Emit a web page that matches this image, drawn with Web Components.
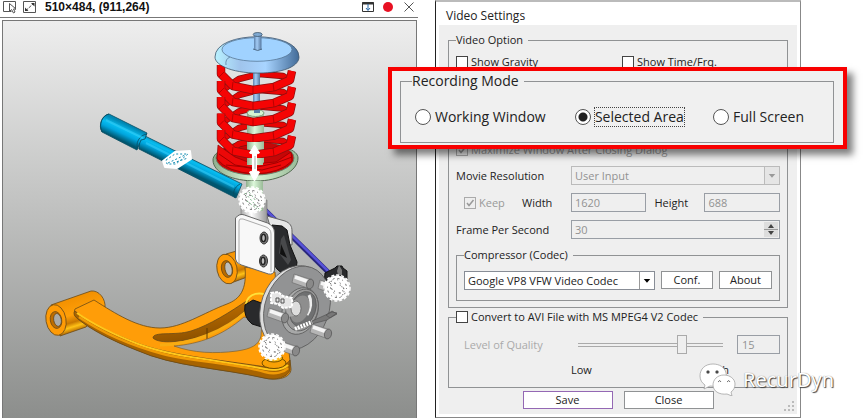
<!DOCTYPE html>
<html lang="en">
<head>
<meta charset="utf-8">
<title>Video Settings</title>
<style>
  html, body { margin: 0; background: #fff; }
  body { font: 500 11px/16px "Open Sans", "Noto Sans", sans-serif; color: #222; }
</style>
</head>
<body>
<app-stage>
  <capture-window slot="capture" caption="510×484, (911,264)"><model-view></model-view></capture-window>
  <video-settings slot="settings"></video-settings>
</app-stage>

<script>
const define = (name, html, setup) => {
  const template = document.createElement('template');
  template.innerHTML = '<style>*{box-sizing:border-box} button,input,select{font:inherit;color:inherit;margin:0;min-width:0;border-radius:0}</style>' + html;
  customElements.define(name, class extends HTMLElement {
    constructor() {
      super();
      this.attachShadow({ mode: 'open' }).append(template.content.cloneNode(true));
    }
    connectedCallback() {
      const root = this.shadowRoot;
      root.querySelectorAll('[data-text]').forEach(n => { n.textContent = this.getAttribute(n.dataset.text) || ''; });
      if (setup) setup(this, root);
    }
  });
};

define('app-stage', `
<style>
  :host { display: grid; grid-template-columns: minmax(0, 418fr) minmax(0, 366fr); column-gap: 17px; padding-right: 64px; min-height: 100vh; box-sizing: border-box; }
  ::slotted(*) { min-width: 0; }
</style>
<slot name="capture"></slot><slot name="settings"></slot>`);

define('capture-window', `
<style>
  :host { display: flex; flex-direction: column; background: #fff; }
  header { display: flex; align-items: center; height: 18px; padding: 0 3px 3px; border-bottom: 1px solid #777; }
  h1 { flex: 1; margin: 0 0 0 8px; font: bold 12px/14px "Liberation Sans", sans-serif; color: #111; white-space: nowrap; }
  button { display: block; padding: 0; border: 0; background: none; height: 14px; }
  svg { display: block; }
  .pick { margin-right: 6px; }
  .right { display: flex; gap: 7px; align-items: center; }
  main { flex: 1; display: flex; margin: 2px 1px 0 2px; border: 1px solid #777; border-bottom: 0; }
  ::slotted(*) { flex: 1; min-width: 0; }
</style>
<header>
  <button class="pick" aria-label="Select area"><svg width="14" height="14" fill="none" stroke="#555"><path d="M8.500 11.500H.500V1.500h12v8"/><path d="M6.500 3.500v8l2-2 2 3.500 1.500-1-1.500-3h2.500z" fill="#fff"/></svg></button>
  <button aria-label="Resize area"><svg width="14" height="14" fill="none" stroke="#555"><path d="M.5 1.500h12v11H.5z"/><path d="M3 10.500l8-7.500" stroke-dasharray="3 1"/><path d="M8 3h3.500v3.500zM2 7.500v3.500h3.500z" fill="#333" stroke="none"/></svg></button>
  <h1 data-text="caption"></h1>
  <div class="right">
    <button aria-label="Save settings"><svg width="13" height="14" fill="none" stroke="#333"><path d="M.5 2.500h11v9H.5z"/><path d="M0 3.500h12" stroke-width="2"/><path d="M6 4v6M4 8l2 2.500L8 8" stroke="#2869a8"/></svg></button>
    <button aria-label="Record"><svg width="13" height="14"><circle cx="6" cy="7" r="5" fill="#e81123"/></svg></button>
    <button aria-label="Close"><svg width="13" height="14" stroke="#555" fill="none"><path d="M2.500 2.500l9 9M11.500 2.500l-9 9"/></svg></button>
  </div>
</header>
<main><slot></slot></main>`);

define('model-view', `
<style>
  :host { display: block; background: linear-gradient(#eee, #c3c4c3 44%, #8c8e8c); }
  svg { display: block; width: 100%; height: 100%; }
</style>
<svg viewBox="3 21 413 397" role="img" aria-label="Suspension assembly model" stroke-linejoin="round">
  <defs>
    <linearGradient id="bg" gradientUnits="userSpaceOnUse" x1="0" y1="21" x2="0" y2="418"><stop stop-color="#eee"/><stop offset=".44" stop-color="#c3c4c3"/><stop offset="1" stop-color="#8c8e8c"/></linearGradient>
    <linearGradient id="cap"><stop stop-color="#b9f2ff"/><stop offset=".3" stop-color="#a0c4ec"/><stop offset=".6" stop-color="#a8d4ff"/><stop offset="1" stop-color="#426b98"/></linearGradient>
    <linearGradient id="grn"><stop stop-color="#8fae8d"/><stop offset=".45" stop-color="#dcf8da"/><stop offset="1" stop-color="#9abb98"/></linearGradient>
    <linearGradient id="rod"><stop stop-color="#5e83ad"/><stop offset=".4" stop-color="#a3ccf6"/><stop offset="1" stop-color="#56779e"/></linearGradient>
    <linearGradient id="wht"><stop stop-color="#aaa"/><stop offset=".4" stop-color="#fff"/><stop offset="1" stop-color="#999"/></linearGradient>
    <linearGradient id="tube" gradientUnits="userSpaceOnUse" x1="166" y1="143" x2="159" y2="158"><stop stop-color="#0088b4"/><stop offset=".35" stop-color="#08bdf0"/><stop offset=".6" stop-color="#00a5dd"/><stop offset="1" stop-color="#00566f"/></linearGradient>
    <linearGradient id="bush" gradientUnits="userSpaceOnUse" x1="76" y1="296" x2="86" y2="328"><stop stop-color="#f29000"/><stop offset=".5" stop-color="#ff9f08"/><stop offset=".72" stop-color="#c87700"/><stop offset=".85" stop-color="#ffc216"/><stop offset="1" stop-color="#b66a00"/></linearGradient>
    <linearGradient id="slot" x2=".35" y2="1"><stop stop-color="#ffac15"/><stop offset=".4" stop-color="#b56800"/><stop offset="1" stop-color="#8c5100"/></linearGradient>
    <g id="front" fill="none"><path d="M221-8L221 1l12 12 20 4 21-3 16-7 2-9" stroke="#8c1010" stroke-width="8.500"/><path d="M221-8L221 1l12 12 20 4 21-3 16-7 2-9" stroke="#f50404" stroke-width="7.200"/><path d="M233 9l-1 8M253 13v8M273 10l1 8M224-1l-5 5" stroke="#a00000" stroke-width=".7"/></g>
    <g id="back" fill="none"><path d="M291 5l-8-5-24-2-20 5-18 12" stroke="#7c1010" stroke-width="6.500"/><path d="M291 5l-8-5-24-2-20 5-18 12" stroke="#e80404" stroke-width="5.200"/></g>
    <g id="ball"><circle r="12.500" fill="#fff"/><circle r="13" fill="none" stroke="#fff" stroke-width="1.500" stroke-dasharray="3 2"/><g fill="none" stroke="#555" stroke-width=".9"><circle r="9.500" stroke-dasharray="1 4 2 3"/><ellipse rx="5" ry="10" transform="rotate(-20)" stroke-dasharray="1 3"/><ellipse rx="8" ry="4" transform="rotate(25)" stroke-dasharray="1 3 2 4"/></g></g>
    <g id="stud"><path d="M-8-6L9-.500 7 8.500-10 2.500z" fill="#b5b5b5" stroke="#666" stroke-width=".6"/><path d="M-7-3L7 2" stroke="#f5f5f5" stroke-width="3.500"/><ellipse cx="8" cy="4" rx="3.500" ry="5" transform="rotate(15 8 4)" fill="#898989" stroke="#555" stroke-width=".7"/></g>
    <g id="bolt"><ellipse rx="4" ry="6" fill="#777" stroke="#333"/><ellipse cx="-.5" rx="2" ry="3.600" fill="#bbb" stroke="#222" stroke-width="1.400"/></g>
  </defs>

  <g stroke="#6a4a18" stroke-width=".8">
    <path d="M226 254L240 250 250 276 231 283z" fill="url(#bush)"/>
    <ellipse cx="227" cy="269" rx="10" ry="15" transform="rotate(-12 227 269)" fill="#ff9b05"/>
    <ellipse cx="227" cy="269" rx="5.500" ry="8.500" transform="rotate(-12 227 269)" fill="#b86b00"/>
    <ellipse cx="228.500" cy="269" rx="3.500" ry="7" transform="rotate(-12 228 269)" fill="#bcbdbb"/>
    <path d="M51 305L91 291c8-1 15 8 14 17L86 327 60 336z" fill="url(#bush)"/>
    <ellipse cx="56" cy="320" rx="10" ry="15.500" transform="rotate(-10 56 320)" fill="#ff9b05"/>
    <ellipse cx="56" cy="320" rx="5.700" ry="8.500" transform="rotate(-10 56 320)" fill="#bd6d00"/>
    <ellipse cx="57.500" cy="320" rx="3.800" ry="6.500" transform="rotate(-10 57 320)" fill="#a9aaa8"/>
    <path d="M75 309L94 300C116 314 138 328 160 328c22 0 43-15 67-24 13-5 20-14 18-37l30 5 5 70 9 10 2 17c0 9-14 12-26 9-43-10-91-11-128-28-24-9-46-21-60-32-3-2-3-7-2-9z" fill="#ff9d08"/>
    <path d="M75 311c14 12 36 22 62 32 32 12 76 16 129 24 10 2 20-1 24-7v10c-2 7-14 11-26 8-43-10-90-11-128-28-23-9-45-20-58-31-4-3-5-6-3-8z" fill="#a76300"/>
  </g>
  <g fill="none">
    <path d="M77 313c17 12 38 22 61 31 34 13 80 16 127 25 10 2 19 0 23-4" stroke="#ffc81c" stroke-width="2"/>
    <path d="M79 317c28 19 54 29 84 37 33 8 70 9 102 18 11 3 19 0 23-4" stroke="#f09a06" stroke-width="2.500"/>
    <path d="M153 338c6 6 29 5 55-4 18-7 31-17 40-27v-7c-18 12-38 25-57 31-16 5-38 0-38 7z" fill="url(#slot)" stroke="#6a4a18" stroke-width=".8"/>
    <path d="M160 345c30 0 64-13 88-35" stroke="#f8ac12" stroke-width="3"/>
    <path d="M207 328v11" stroke="#5d3900"/>
  </g>
  <path d="M174 346c25-2 48-10 70-29l18 4-1 15c-2 9-10 13-24 15-22 3-44 2-63-5z" fill="url(#bg)" stroke="#7e622f" stroke-width=".7"/>
  <path d="M246 304c2-11 15-14 25-6" fill="none" stroke="#ffe13a" stroke-width="2"/>
  <path d="M245 305l8-5 14 5-2 23-13-4q-9-7-7-19z" fill="#292a2c" stroke="#111"/>
  <ellipse cx="274" cy="363" rx="12" ry="5.500" fill="#f9a105" stroke="#735000"/><ellipse cx="274" cy="358" rx="8.500" ry="4" fill="#ffbd18" stroke="#735000"/>

  <path d="M265 210l63 62" stroke="#29277d" stroke-width="5"/><path d="M266 210l62 61" stroke="#5752d8" stroke-width="2.500"/>
  <path d="M325 273l10-5 2-2h5l1 2 4 3v13l-14 6-9-5z" fill="#292a2c" stroke="#111"/><path d="M337 271l2-6 3 5v5h-4z" fill="#777"/>

  <path d="M267 216l18 5c5 2 7 5 7 10v14l-17-2z" fill="#e6e6e6" stroke="#666"/>
  <path d="M241 200h26v28l-26-6z" fill="url(#wht)" stroke="#777" stroke-width=".6"/>
  <path d="M272 225l10 1 5 4 3 15 7 17-1 8-11 6-8-7-7-10z" fill="#2a2b2d" stroke="#111"/>
  <path d="M281 239l3-4 7 25-3 5-9-12z" fill="#48494b"/><path d="M281 244l6 14-7-4z" fill="#111"/>
  <path d="M235.500 218q4-5 9-3l23 8q7 3 7 10v37q-1 5-6 4l-27-9q-6-2-6-6z" fill="#f8f8f8" stroke="#666"/>
  <path d="M239 264v-43q0-3 4-2l23 8q5 2 5 7v38" fill="none" stroke="#aaa"/>
  <use href="#bolt" x="264" y="238"/><use href="#bolt" x="263.500" y="261"/>

  <g stroke="#5d5d5d" stroke-width=".8">
    <ellipse cx="294" cy="308" rx="33" ry="43.500" transform="rotate(20 294 308)" fill="#ddd"/>
    <ellipse cx="297" cy="308" rx="32" ry="43" transform="rotate(20 297 308)" fill="#929394"/>
    <ellipse cx="300" cy="311" rx="17.500" ry="24" transform="rotate(20 300 311)" fill="#a7a8a8"/>
    <ellipse cx="302" cy="310" rx="15.500" ry="21.500" transform="rotate(20 302 310)" fill="#999"/>
    <ellipse cx="303" cy="309" rx="12.500" ry="18" transform="rotate(20 303 309)" fill="#6f7071"/>
    <path d="M309 295c3 6 2 14-2 20" fill="none" stroke="#eee" stroke-width="3"/>
    <ellipse cx="300" cy="309" rx="9" ry="14" transform="rotate(20 300 309)" fill="#8e8e8e" stroke="none"/>
    <path d="M284 302l12-2 4 15-12 2z" fill="#aaa" stroke="none"/><ellipse cx="296" cy="308.500" rx="5" ry="7.500" fill="#ddd"/>
  </g>
  <use href="#stud" x="302" y="280"/><use href="#stud" x="277" y="314"/><use href="#stud" x="320" y="330"/><use href="#stud" x="288" y="347"/><use href="#stud" x="328" y="286"/>
  <path d="M299 327l33-15 5 1-10 7-23 6zM326 315l6-4 5 3-7 4z" fill="#777" stroke="#555" stroke-width=".7"/>
  <path d="M295 329l17-7" stroke="#fff" stroke-width="4" stroke-dasharray="2 1"/>
  <path d="M271 293l7-1 5 4 9 2v9l-9 1-5-4-7-1z" fill="#e5e5e5" stroke="#fff" stroke-width="2" stroke-dasharray="3 1"/><path d="M276 298h3v4h-3zm5 1h3v4h-3z" fill="none" stroke="#555"/>
  <use href="#ball" x="337" y="288"/><use href="#ball" x="272" y="347"/>

  <path d="M213 160c0 13 20 21 43 21s42-10 42-23c0-8-16-14-42-14s-43 7-43 16z" fill="url(#grn)" stroke="#536951"/>
  <ellipse cx="255" cy="158" rx="39" ry="17" fill="#c50707" stroke="#69826a"/>
  <g><use href="#back" y="76"/><use href="#back" y="92"/><use href="#back" y="108.500"/><use href="#back" y="125"/><use href="#back" y="141"/></g>
  <path d="M253 70h7v44h-7z" fill="url(#rod)"/>
  <path d="M247 113v51q8 5 17 0v-51z" fill="url(#grn)"/><ellipse cx="255.500" cy="113" rx="8.500" ry="3.500" fill="#d5f3d1" stroke="#809c7e"/><path d="M254 108h6v5h-6z" fill="#597fa8"/>
  <g><use href="#front" y="73"/><use href="#front" y="89"/><use href="#front" y="105"/><use href="#front" y="121.500"/><use href="#front" y="138"/></g>
  <path d="M218 145l-1 14q10 13 38 15 25-1 37-13l-1-9-15 10-23 2-18-7z" fill="#ec0808" stroke="#8c0000" stroke-width=".7"/>
  <path d="M219 154l16 11 18 3 23-5 16-6M226 165l18 2 18 3 19-5" fill="none" stroke="#a20000"/>
  <path d="M247 142h17v5h-17zM247 158h16v7h-16z" fill="url(#grn)"/>
  <path d="M246 181h17v30h-17z" fill="url(#grn)"/>
  <path d="M215 57c0-27 84-27 84 0 0 8-12 15-36 16-28 1-48-7-48-16z" fill="url(#cap)" stroke="#3f566c" stroke-width=".8"/>
  <ellipse cx="257" cy="49.500" rx="35" ry="11.800" fill="#a0d2ff" stroke="#4f6d89" stroke-width=".7"/>
  <path d="M230 57q-5 2-4 8" fill="none" stroke="#4f7392" stroke-width=".7"/>
  <path d="M254 35h7.500v15h-7.500z" fill="url(#rod)"/><ellipse cx="257.700" cy="34.500" rx="4.500" ry="2" fill="#7fa9d2" stroke="#3d556b" stroke-width=".8"/><path d="M253 49q5 3 9 0" fill="none" stroke="#4f6d89"/>

  <g stroke="#064b61" stroke-width=".8">
    <path d="M139 133l103 51-6 14-97-49z" fill="url(#tube)"/>
    <path d="M109 114l38 19-2 6-4 1-4 10-35-18c-4-7 0-17 7-18z" fill="url(#tube)"/>
    <path d="M109 114c-6 1-11 10-7 18" fill="none"/><path d="M147 134c-8 1-12 10-9 15M240 184c-6 3-8 10-5 14" fill="none"/>
  </g>
  <path d="M106 120l37 18M146 143l88 44" stroke="#45d8ff" stroke-width="2" opacity=".45"/>
  <path d="M163 161l12-9 15-1 1 8-14 9-12-1z" fill="#fff" stroke="#fff" stroke-width="2"/><path d="M166 160l9-6 13 0-12 10-9 0zM168 163l17-8M173 163l15-5" fill="none" stroke="#178eb2" stroke-dasharray="2 2"/>
  <use href="#ball" x="252" y="200"/>
  <g fill="none" stroke="#7fb489"><path d="M245 193l14 16M247 201l10 8M249 192l7 9" stroke-dasharray="2 2"/></g>
  <path d="M254.500 145l5 8-3 1v17l3 1-5 9-5-9 3-1v-17l-3-1z" fill="#fff" stroke="#fff"/><path d="M255 156v13" stroke="#888" stroke-width=".7"/>
</svg>`);

define('group-box', `
<style>
  :host { display: block; }
  fieldset { margin: 0; min-width: 0; border: 1px solid #909294; padding: var(--box-padding, 6px 7px 6px); box-shadow: inset 0 0 0 1px #fafafa; box-shadow: none; }
  legend { padding: 0 5px 0 0; height: var(--legend-height, 16px); margin-left: var(--legend-indent, 0px); white-space: nowrap; }
</style>
<fieldset><legend><slot name="legend"><span data-text="legend"></span></slot></legend><slot></slot></fieldset>`);

define('check-field', `
<style>
  :host { display: block; white-space: nowrap; }
  label { display: flex; align-items: center; gap: 3px; height: 16px; }
  input { appearance: none; width: 12px; height: 12px; border: 1px solid #444; background: #fff; }
  span { display: grid; }
  input, svg { grid-area: 1 / 1; }
  svg { display: none; }
  b { font-weight: inherit; }
  :host([disabled]) { color: #999; }
  :host([disabled]) input { border-color: #aaa; background: #eee; }
  input:checked + svg { display: block; }
</style>
<label><span><input type="checkbox"><svg width="12" height="12" fill="none" stroke="#999" stroke-width="1.500"><path d="M3 6l2 2.500L9.500 3"/></svg></span><b data-text="label"></b></label>`,
(el, root) => {
  const input = root.querySelector('input');
  input.checked = el.hasAttribute('checked');
  input.disabled = el.hasAttribute('disabled');
});

define('combo-field', `
<style>
  :host { display: block; min-width: 0; }
  label { display: grid; grid-template-columns: var(--label-width, 115px) minmax(0, 1fr); align-items: center; white-space: nowrap; }
  :host([bare]) label { grid-template-columns: minmax(0, 1fr); }
  :host([bare]) .text { display: none; }
  .box { display: grid; grid-template-columns: minmax(0, 1fr) 15px; height: 19px; border: 1px solid #888d96; background: #fff; }
  select { grid-area: 1 / 1 / 2 / 3; appearance: none; border: 0; background: none; padding: 0 18px 0 3px; outline: 0; opacity: 1; line-height: 16px; }
  svg { grid-area: 1 / 2; width: 15px; height: 17px; border-left: 1px solid #999; pointer-events: none; }
  :host([disabled]) .box { border-color: #bbb; background: #efefef; color: #929292; }
  :host([disabled]) svg { border-color: #bbb; background: #e5e5e5; fill: #999; }
</style>
<label><span class="text" data-text="label"></span><span class="box"><select><option data-text="value"></option></select><svg viewBox="0 0 15 17"><path d="M4 7h7l-3.500 4z"/></svg></span></label>`,
(el, root) => {
  const s = root.querySelector('select');
  s.disabled = el.hasAttribute('disabled');
  s.setAttribute('aria-label', el.getAttribute('label'));
});

define('value-field', `
<style>
  :host { display: block; min-width: 0; }
  label { display: grid; grid-template-columns: var(--label-width, 115px) minmax(0, 1fr); align-items: center; white-space: nowrap; }
  .box { display: flex; height: 19px; border: 1px solid #999ea5; background: #efefef; color: #929292; }
  input { flex: 1; border: 0; background: none; padding: 0 3px; }
  svg { display: none; width: 14px; height: 15px; margin: 1px; background: #ddd; }
  :host([spin]) svg { display: block; }
</style>
<label><span data-text="label"></span><span class="box"><input type="text" disabled><svg viewBox="0 0 14 15"><path d="M0 7.500h14" stroke="#999"/><path d="M4 6l3-4 3 4zM4 9l3 4 3-4z" fill="#444"/></svg></span></label>`,
(el, root) => { root.querySelector('input').value = el.getAttribute('value'); });

define('push-button', `
<style>
  :host { display: block; }
  button { display: block; width: 100%; height: 18px; padding: 0; border: 1px solid #909294; background: #fff; line-height: 16px; text-align: center; }
  :host([primary]) button { border-color: #9468b4; }
</style>
<button type="button"><slot></slot></button>`);

define('quality-field', `
<style>
  :host { display: block; }
  .row { display: grid; grid-template-columns: 122px minmax(0, 1fr) 14px 43px; align-items: center; height: 19px; }
  label { padding-left: 8px; color: #aaa; white-space: nowrap; }
  input { appearance: none; }
  input[type=range] { width: 100%; height: 19px; background: linear-gradient(#aaa 1px, #efefef 1px 3px, #aaa 3px) 0 8px / 100% 4px no-repeat; }
  input[type=range]::-webkit-slider-thumb { appearance: none; width: 10px; height: 19px; border: 1px solid #aaa; background: #efefef; }
  input[type=text] { grid-column: 4; width: 100%; height: 19px; border: 1px solid #999ea5; background: #efefef; color: #929292; padding: 0 4px; }
  .ends { display: flex; justify-content: space-between; margin: 8px 51px 0 115px; }
</style>
<div class="row"><label for="level">Level of Quality</label><input id="level" type="range" min="0" max="100" value="73" disabled><input type="text" aria-label="Quality value" value="15" disabled></div>
<div class="ends"><span>Low</span><span>High</span></div>`);

define('recording-mode', `
<style>
  :host { display: block; box-sizing: border-box; border: 4px solid #f80000; background: #f0f0f0; box-shadow: 6px 6px 7px rgba(0,0,0,.5); padding: 1px 9px 2px 8px; font-size: 14px; line-height: 18px; }
  group-box { --legend-height: 18px; --legend-indent: 1px; --box-padding: 18px 10px 16px; }
  .row { display: flex; justify-content: space-between; padding: 0 19px 0 4px; }
  label { display: flex; align-items: center; gap: 4px; white-space: nowrap; height: 18px; }
  input { appearance: none; width: 16px; height: 16px; border: 1px solid #555; border-radius: 50%; background: #fff; }
  input:checked { background: radial-gradient(circle, #222 4px, #fff 5px); }
  input:checked + span { outline: 1px dotted #444; }
</style>
<group-box legend="Recording Mode"><div class="row">
  <label><input type="radio" name="mode"><span>Working Window</span></label>
  <label><input type="radio" name="mode" checked><span>Selected Area</span></label>
  <label><input type="radio" name="mode"><span>Full Screen</span></label>
</div></group-box>`);

define('brand-mark', `
<style>
  :host { display: flex; align-items: center; gap: 7px; font: 400 20px/28px "Noto Sans", sans-serif; color: #fff; text-shadow: 1px 1px 1px #444, 0 0 1px #777; white-space: nowrap; }
  svg { flex: none; }
</style>
<svg width="37" height="33" viewBox="0 0 37 33" fill="#fff" stroke="#999" stroke-width=".7"><path d="M14 1C6 1 1 6 1 13c0 4 2 7 5 9l-1 4 6-3c13 2 18-5 16-13C26 4 20 1 14 1z"/><circle cx="9" cy="9" r="1.500" fill="#333"/><circle cx="18" cy="9" r="1.500" fill="#333"/><path d="M25 12c-7 0-11 5-11 10 0 6 6 10 14 9l5 2-1-4c3-2 4-5 4-8 0-5-5-9-11-9z"/><path d="M19 19q2-3 3 0M28 19q2-3 3 0" fill="none" stroke="#333"/></svg><span>RecurDyn</span>`);

define('video-settings', `
<style>
  :host { display: block; position: relative; box-sizing: border-box; background: #fff; border: 1px solid #888; border-left-color: #222; border-top: 2px solid #bbb; padding: 0 3px 3px; }
  h2 { margin: 0; padding: 6px 0 1px 7px; font-size: 12px; line-height: 16px; font-weight: 500; }
  .body { background: #efefef; padding: 7px 9px 5px; }
  .stack { display: flex; flex-direction: column; gap: 8px; }
  .checks { display: grid; grid-template-columns: 166px 1fr; }
  .reserved { height: 56px; }
  .size { display: grid; grid-template-columns: 66px minmax(0, 124fr) minmax(0, 133fr); align-items: center; }
  .size check-field { padding-left: 8px; }
  .size value-field { --label-width: 49px; }
  .size value-field + value-field { --label-width: 50px; padding-left: 8px; }
  .codec { --box-padding: 8px 7px 10px; }
  .codec div { display: grid; grid-template-columns: minmax(0, 191fr) minmax(0, 52fr) minmax(0, 53fr); gap: 6px; }
  .avi { margin-top: 1px; --box-padding: 10px 7px 9px; }
  .actions { display: flex; justify-content: center; gap: 11px; margin-top: 3px; }
  .actions push-button { width: 90px; }
  recording-mode { position: absolute; left: -48px; right: -47px; top: 65px; }
  brand-mark { position: absolute; left: 263px; top: 361px; }
  .grip { position: absolute; right: 5px; bottom: 5px; }
</style>
<h2>Video Settings</h2>
<div class="body">
  <group-box legend="Video Option">
    <div class="stack">
      <div class="checks"><check-field label="Show Gravity"></check-field><check-field label="Show Time/Frq."></check-field></div>
      <div class="reserved"></div>
      <check-field label="Maximize Window After Closing Dialog" checked disabled></check-field>
      <combo-field label="Movie Resolution" value="User Input" disabled></combo-field>
      <div class="size"><check-field label="Keep" checked disabled></check-field><value-field label="Width" value="1620"></value-field><value-field label="Height" value="688"></value-field></div>
      <value-field label="Frame Per Second" value="30" spin></value-field>
      <group-box class="codec" legend="Compressor (Codec)"><div><combo-field bare label="Codec" value="Google VP8 VFW Video Codec"></combo-field><push-button>Conf.</push-button><push-button>About</push-button></div></group-box>
    </div>
  </group-box>
  <group-box class="avi"><check-field slot="legend" label="Convert to AVI File with MS MPEG4 V2 Codec"></check-field><quality-field></quality-field></group-box>
  <div class="actions"><push-button primary>Save</push-button><push-button>Close</push-button></div>
</div>
<svg class="grip" width="11" height="11" fill="#bbb" aria-hidden="true"><path d="M8 0h2v2H8zM4 4h2v2H4zM8 4h2v2H8zM0 8h2v2H0zM4 8h2v2H4zM8 8h2v2H8z"/></svg>
<recording-mode></recording-mode>
<brand-mark></brand-mark>`);
</script>
</body>
</html>
